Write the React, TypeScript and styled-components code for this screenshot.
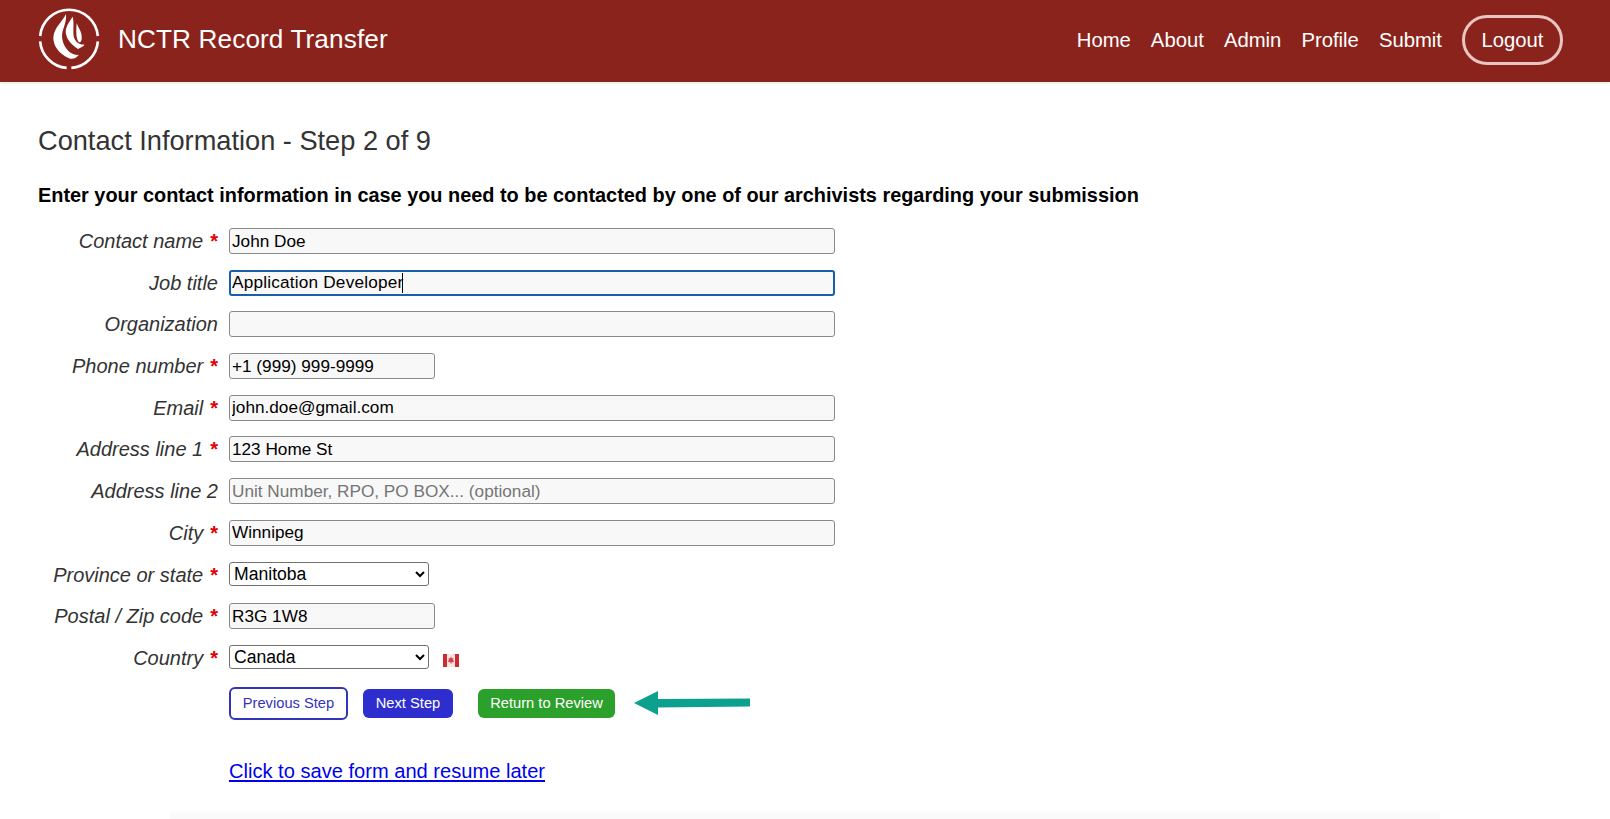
import React from 'react';
import styled, { createGlobalStyle } from 'styled-components';

const GlobalStyle = createGlobalStyle`
  html, body {
    margin: 0;
    height: 819px;
    overflow: hidden;
    background: #fff;
    font-family: "Liberation Sans", Arial, sans-serif;
  }
`;

const Header = styled.header`
  height: 82px;
  background: #8a231c;
  box-shadow: 0 1px 4px rgba(0, 0, 0, 0.12);
  display: flex;
  align-items: center;
  justify-content: space-between;
  padding: 0 47px 4px 38px;
  box-sizing: border-box;
`;

const Brand = styled.div`
  display: flex;
  align-items: center;
  gap: 18px;
  color: #fff;
  font-size: 26.2px;
  letter-spacing: 0.1px;
`;

const Nav = styled.nav`
  display: flex;
  align-items: center;
  gap: 20px;
  margin-top: 2px;
`;

const NavLink = styled.a`
  color: #fff;
  font-size: 20.3px;
  text-decoration: none;
`;

const LogoutLink = styled(NavLink)`
  width: 101px;
  height: 50px;
  box-sizing: border-box;
  border: 3px solid #eac4c0;
  border-radius: 25px;
  display: flex;
  align-items: center;
  justify-content: center;
`;

const Main = styled.main`
  padding: 44px 0 0 38px;
`;

const Title = styled.h1`
  margin: 0;
  font-size: 27.2px;
  line-height: 30px;
  font-weight: 400;
  color: #333;
`;

const Intro = styled.p`
  margin: 27px 0 0;
  font-size: 19.9px;
  line-height: 24px;
  font-weight: 700;
  color: #000;
`;

const Form = styled.form`
  margin: 21px 0 0 -38px;
`;

const Row = styled.div`
  display: grid;
  grid-template-columns: 218px 1fr;
  column-gap: 11px;
  height: 41.7px;
  align-items: start;
`;

const Label = styled.label`
  font-size: 20px;
  line-height: 26px;
  font-style: italic;
  color: #333;
  text-align: right;
  white-space: nowrap;
`;

const Required = styled.span`
  color: #e00000;
  font-style: normal;
  font-weight: 700;
  margin-left: 7px;
`;

const Field = styled.div`
  position: relative;
  display: flex;
  align-items: center;
  gap: 14px;
`;

const TextInput = styled.input<{ $short?: boolean; $focused?: boolean }>`
  width: ${p => (p.$short ? '206px' : '606px')};
  height: 26px;
  box-sizing: border-box;
  padding: 0 2px;
  background: #f8f8f8;
  border: ${p => (p.$focused ? '2px solid #1760a8' : '1px solid #8a8a8a')};
  border-radius: 3px;
  font: 17.2px "Liberation Sans", Arial, sans-serif;
  color: #000;
  outline: none;

  ${p => p.$focused && 'padding: 0 1px; letter-spacing: 0.2px;'}

  &::placeholder {
    color: #757575;
  }
`;

const Caret = styled.span`
  position: absolute;
  left: 173px;
  top: 3px;
  width: 1px;
  height: 20px;
  background: #000;
`;

const Select = styled.select`
  width: 200px;
  height: 24px;
  box-sizing: border-box;
  background: #fff;
  border: 1px solid #707070;
  border-radius: 3px;
  font: 17.6px "Liberation Sans", Arial, sans-serif;
  color: #000;
`;

const FlagIcon = styled.svg`
  margin-top: 7px;
`;

const Actions = styled.div`
  margin: 0 0 0 229px;
  display: flex;
  align-items: center;
`;

const Button = styled.button<{ $variant: 'outline' | 'primary' | 'success' }>`
  box-sizing: border-box;
  font: 14.7px "Liberation Sans", Arial, sans-serif;
  border-radius: 6px;
  height: ${p => (p.$variant === 'outline' ? '33px' : '29px')};
  padding: 0;
  color: ${p => (p.$variant === 'outline' ? '#3333bb' : '#fff')};
  background: ${p =>
    p.$variant === 'outline' ? '#fff' : p.$variant === 'primary' ? '#2e2ecf' : '#2ba02b'};
  border: ${p => (p.$variant === 'outline' ? '2px solid #3333bb' : 'none')};
`;

const PrevButton = styled(Button)`
  width: 119px;
  margin-right: 15px;
`;

const NextButton = styled(Button)`
  width: 90px;
  margin-right: 25px;
`;

const ReviewButton = styled(Button)`
  width: 137px;
  margin-right: 19px;
`;

const ResumeLink = styled.a`
  display: block;
  margin: 39px 0 0 229px;
  width: fit-content;
  font-size: 20.1px;
  line-height: 24px;
  color: #0000ee;
  text-decoration: underline;
`;

const Footer = styled.footer`
  margin: 30px 170px 0;
  height: 6px;
  background: #fafafa;
  box-shadow: 0 -2px 6px rgba(0, 0, 0, 0.02);
`;

const Logo = () => (
  <svg width="62" height="62" viewBox="12 12 186 186" fill="none" aria-hidden="true">
    <g stroke="#fff" strokeWidth="8">
      <path d="M18.4 96 A87 87 0 0 1 191.6 96" />
      <path d="M191.6 112 A87 87 0 0 1 112 191.7" />
      <path d="M98 191.7 A87 87 0 0 1 18.4 112" />
    </g>
    <g fill="#fff">
      <path d="M96 30 C88 50 60 70 58 100 C57 125 75 150 105 163 C118 168 128 160 135 152 C125 155 110 150 98 135 C85 118 80 95 88 75 C93 60 98 45 96 30Z" />
      <path d="M116 38 C105 55 92 70 96 90 C100 112 118 125 132 135 C140 130 148 128 152 122 C140 122 128 118 122 105 C114 90 122 60 116 38Z" />
      <path d="M128 58 C135 75 145 85 143 105 C142 112 140 115 135 115 C128 108 125 90 128 58Z" />
    </g>
  </svg>
);

const Flag = () => (
  <FlagIcon width="16" height="13" viewBox="0 0 16 13" aria-hidden="true">
    <rect width="16" height="13" fill="#f6e6e6" />
    <rect width="4" height="13" fill="#cf2a30" />
    <rect x="12" width="4" height="13" fill="#cf2a30" />
    <path d="M8 2.5 L9 4.5 L10.5 4 L10 6.5 L11.2 6.5 L10.5 8 L8.3 8.6 L8.3 10 L7.7 10 L7.7 8.6 L5.5 8 L4.8 6.5 L6 6.5 L5.5 4 L7 4.5Z" fill="#d84048" />
  </FlagIcon>
);

const Arrow = () => (
  <svg width="116" height="26" viewBox="0 0 116 26" aria-hidden="true">
    <path d="M0 13 L24 1 L24 9 L116 8.5 L116 16.5 L24 17.5 L24 25Z" fill="#0ca08f" />
  </svg>
);

const navItems = ['Home', 'About', 'Admin', 'Profile', 'Submit'];

interface TextField {
  label: string;
  value?: string;
  placeholder?: string;
  required?: boolean;
  short?: boolean;
  focused?: boolean;
}

const topFields: TextField[] = [
  { label: 'Contact name', value: 'John Doe', required: true },
  { label: 'Job title', value: 'Application Developer', focused: true },
  { label: 'Organization' },
  { label: 'Phone number', value: '+1 (999) 999-9999', required: true, short: true },
  { label: 'Email', value: 'john.doe@gmail.com', required: true },
  { label: 'Address line 1', value: '123 Home St', required: true },
  { label: 'Address line 2', placeholder: 'Unit Number, RPO, PO BOX... (optional)' },
  { label: 'City', value: 'Winnipeg', required: true },
];

const FieldLabel = ({ text, required }: { text: string; required?: boolean }) => (
  <Label>
    {text}
    {required && <Required>*</Required>}
  </Label>
);

const App: React.FC = () => {
  return (
    <>
      <GlobalStyle />
      <Header>
        <Brand>
          <Logo />
          NCTR Record Transfer
        </Brand>
        <Nav>
          {navItems.map(item => (
            <NavLink key={item}>{item}</NavLink>
          ))}
          <LogoutLink>Logout</LogoutLink>
        </Nav>
      </Header>
      <Main>
        <Title>Contact Information - Step 2 of 9</Title>
        <Intro>
          Enter your contact information in case you need to be contacted by one of our archivists regarding your submission
        </Intro>
        <Form>
          {topFields.map(f => (
            <Row key={f.label}>
              <FieldLabel text={f.label} required={f.required} />
              <Field>
                <TextInput
                  readOnly
                  defaultValue={f.value}
                  placeholder={f.placeholder}
                  $short={f.short}
                  $focused={f.focused}
                />
                {f.focused && <Caret />}
              </Field>
            </Row>
          ))}
          <Row>
            <FieldLabel text="Province or state" required />
            <Field>
              <Select defaultValue="Manitoba">
                <option>Manitoba</option>
              </Select>
            </Field>
          </Row>
          <Row>
            <FieldLabel text="Postal / Zip code" required />
            <Field>
              <TextInput readOnly defaultValue="R3G 1W8" $short />
            </Field>
          </Row>
          <Row>
            <FieldLabel text="Country" required />
            <Field>
              <Select defaultValue="Canada">
                <option>Canada</option>
              </Select>
              <Flag />
            </Field>
          </Row>
          <Actions>
            <PrevButton type="button" $variant="outline">Previous Step</PrevButton>
            <NextButton type="button" $variant="primary">Next Step</NextButton>
            <ReviewButton type="button" $variant="success">Return to Review</ReviewButton>
            <Arrow />
          </Actions>
          <ResumeLink href="#">Click to save form and resume later</ResumeLink>
        </Form>
      </Main>
      <Footer />
    </>
  );
};

export default App;
